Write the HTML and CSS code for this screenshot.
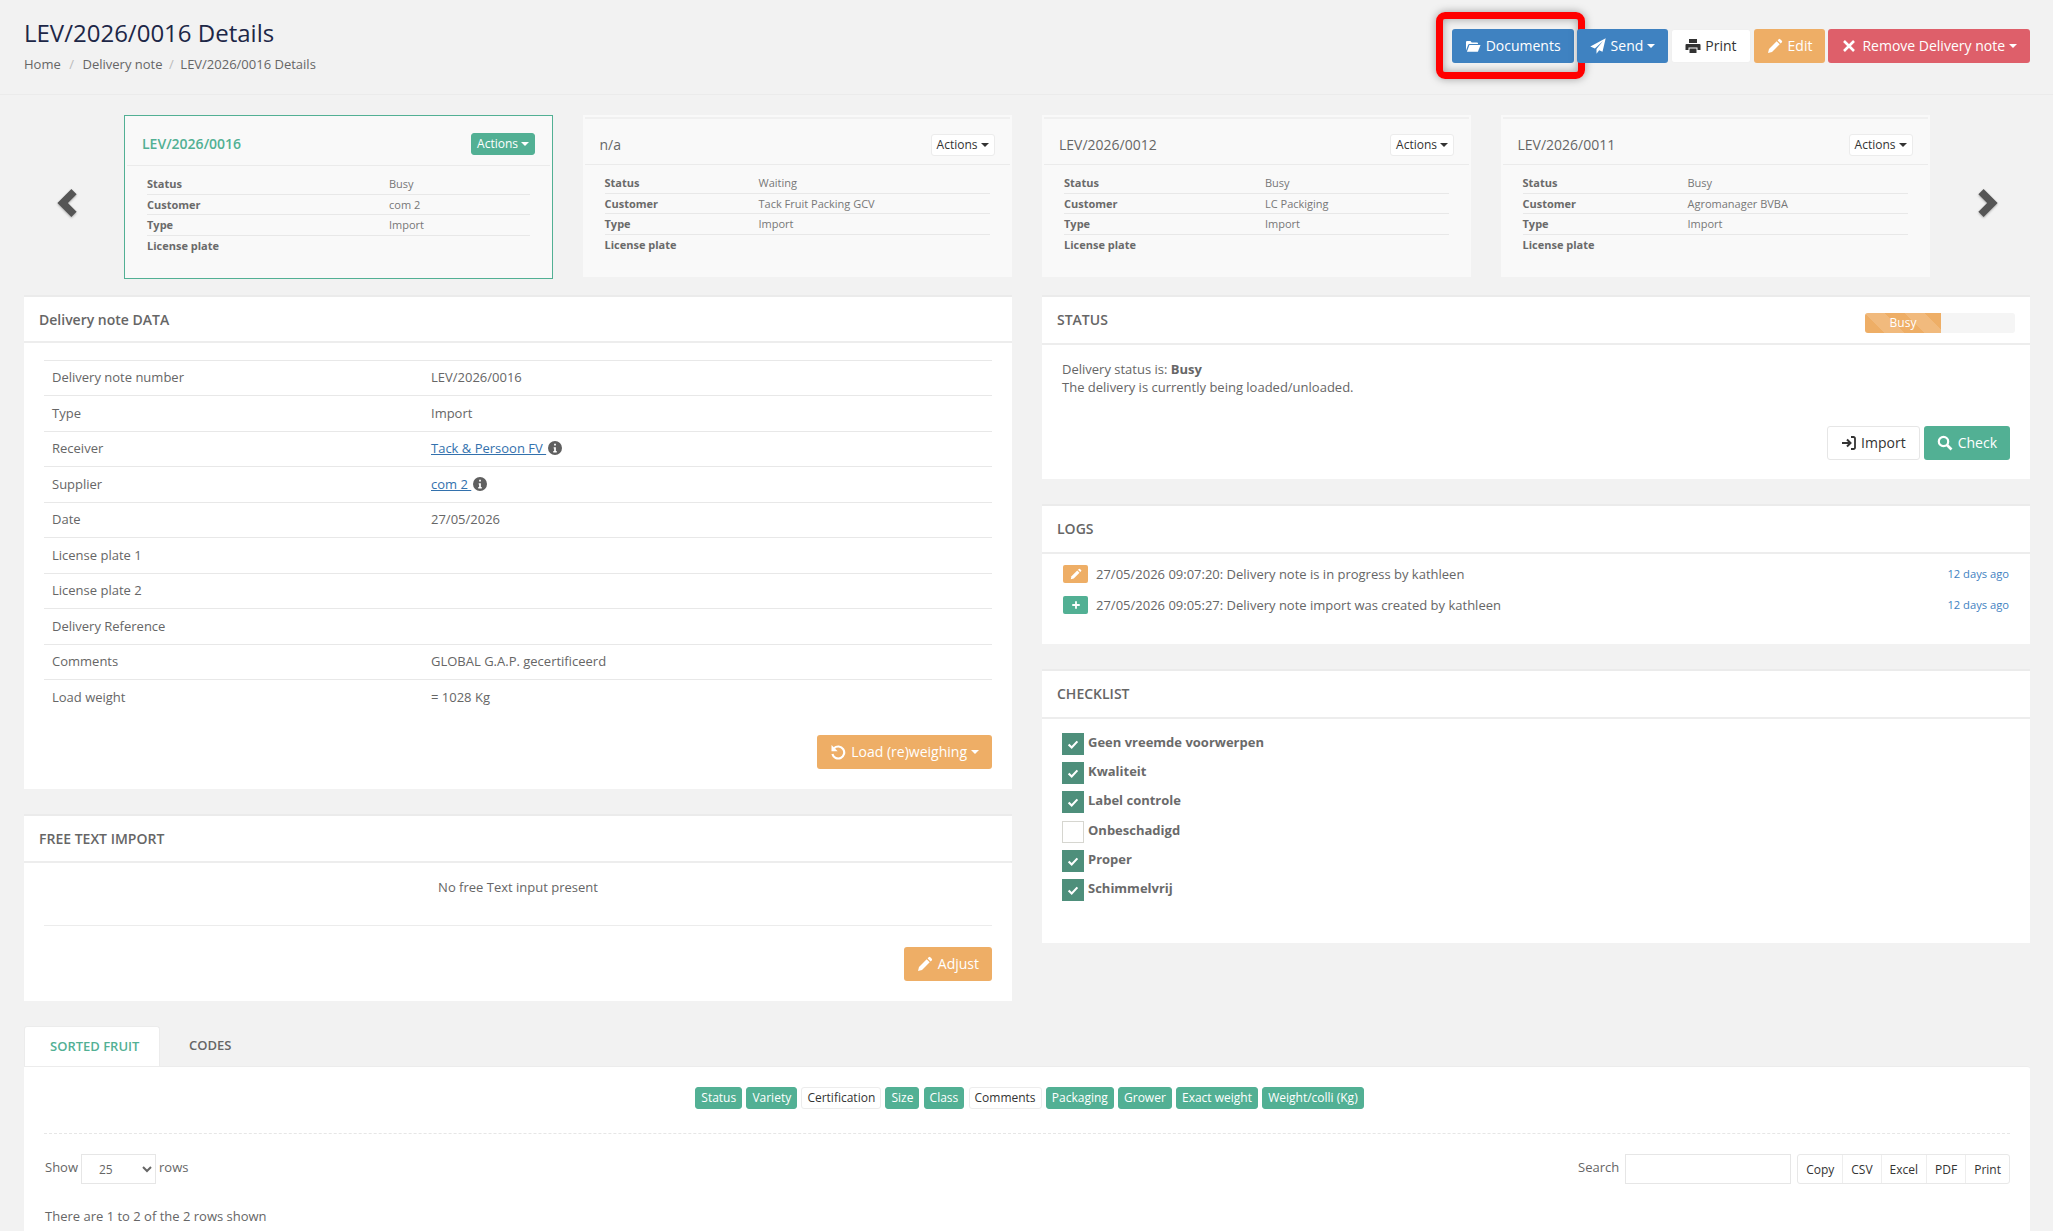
FILE: index.html
```html
<!DOCTYPE html>
<html lang="en">
<head>
<meta charset="utf-8">
<title>LEV/2026/0016 Details</title>
<link rel="stylesheet" href="styles.css">
</head>
<body>
<svg class="defs" width="0" height="0" aria-hidden="true">
  <symbol id="i-folder" viewBox="0 0 16 16"><path d="M1 4a1 1 0 0 1 1-1h3.500l1.200 1.400H12a1 1 0 0 1 1 1V6H4.500a1.500 1.500 0 0 0-1.400 1L1 12.500z"/><path d="M4.400 7h11.100l-2.400 6.200a1 1 0 0 1-.9.6H1.900z"/></symbol>
  <symbol id="i-plane" viewBox="0 0 16 16"><path d="M15.700.3.3 8.600l4.600 1.800L13 3 6.500 11v4.700l2.700-3.400 3.300 1.500z"/></symbol>
  <symbol id="i-print" viewBox="0 0 16 16"><path d="M4 1h8v4H4z"/><path d="M1.500 6h13a1 1 0 0 1 1 1v5h-3V9.500h-9V12h-3V7a1 1 0 0 1 1-1z"/><path d="M4.500 10.500h7V15h-7z"/></symbol>
  <symbol id="i-pencil" viewBox="0 0 16 16"><path d="M11.800 1.200a1 1 0 0 1 1.400 0l1.600 1.600a1 1 0 0 1 0 1.400l-1.200 1.200-3-3z"/><path d="M9.700 3.300l3 3L5 14l-4 1 1-4z"/></symbol>
  <symbol id="i-x" viewBox="0 0 16 16"><path d="M3 3l10 10M13 3 3 13" fill="none" stroke="currentColor" stroke-width="2.600"/></symbol>
  <symbol id="i-left" viewBox="0 0 16 16"><path d="M10.500 0 2.500 8l8 8 3-3-5-5 5-5z"/></symbol>
  <symbol id="i-right" viewBox="0 0 16 16"><path d="M5.500 0l8 8-8 8-3-3 5-5-5-5z"/></symbol>
  <symbol id="i-info" viewBox="0 0 16 16"><circle cx="8" cy="8" r="8"/><path d="M7 3h2v2H7zM6.500 7H9v4.500h1V13H6v-1.500h1V8.500h-.5z" fill="#fff"/></symbol>
  <symbol id="i-undo" viewBox="0 0 16 16"><path d="M4 4.200A6 6 0 1 1 2.400 10" fill="none" stroke="currentColor" stroke-width="2.200"/><path d="M1.500 1v6.200h6.200z"/></symbol>
  <symbol id="i-search" viewBox="0 0 16 16"><circle cx="6.500" cy="6.500" r="4.700" fill="none" stroke="currentColor" stroke-width="2.200"/><path d="M10 10l4.500 4.500" fill="none" stroke="currentColor" stroke-width="2.600"/></symbol>
  <symbol id="i-signin" viewBox="0 0 16 16"><path d="M1 8h8M6 4.500 9.500 8 6 11.500" fill="none" stroke="currentColor" stroke-width="2"/><path d="M10 2h2.500A1.500 1.500 0 0 1 14 3.500v9a1.500 1.500 0 0 1-1.500 1.500H10" fill="none" stroke="currentColor" stroke-width="1.800"/></symbol>
  <symbol id="i-plus" viewBox="0 0 16 16"><path d="M8 3v10M3 8h10" fill="none" stroke="currentColor" stroke-width="2.400"/></symbol>
  <symbol id="i-check" viewBox="0 0 16 16"><path d="M3 8.500 6.500 12 13 5" fill="none" stroke="currentColor" stroke-width="2.400"/></symbol>
</svg>

<header class="page-head">
  <div>
    <h1 class="page-title">LEV/2026/0016 Details</h1>
    <nav class="crumbs"><span>Home</span><i>/</i><span>Delivery note</span><i>/</i><span>LEV/2026/0016 Details</span></nav>
  </div>
  <div class="head-actions">
    <a class="btn blue highlighted"><svg class="ico"><use href="#i-folder"/></svg>Documents</a>
    <a class="btn blue"><svg class="ico"><use href="#i-plane"/></svg>Send<b class="caret"></b></a>
    <a class="btn white tight"><svg class="ico"><use href="#i-print"/></svg>Print</a>
    <a class="btn orange"><svg class="ico"><use href="#i-pencil"/></svg>Edit</a>
    <a class="btn red"><svg class="ico"><use href="#i-x"/></svg>Remove Delivery note<b class="caret"></b></a>
  </div>
</header>

<section class="carousel">
  <div class="arrow arrow-prev"><svg class="arrow-ico"><use href="#i-left"/></svg></div>
  <article class="mini active">
    <div class="mini-head"><span>LEV/2026/0016</span><a class="btn-xs green">Actions<b class="caret"></b></a></div>
    <dl class="mini-table">
      <div><dt>Status</dt><dd>Busy</dd></div>
      <div><dt>Customer</dt><dd>com 2</dd></div>
      <div><dt>Type</dt><dd>Import</dd></div>
      <div><dt>License plate</dt><dd></dd></div>
    </dl>
  </article>
  <article class="mini cols-b">
    <div class="mini-head"><span>n/a</span><a class="btn-xs">Actions<b class="caret"></b></a></div>
    <dl class="mini-table">
      <div><dt>Status</dt><dd>Waiting</dd></div>
      <div><dt>Customer</dt><dd>Tack Fruit Packing GCV</dd></div>
      <div><dt>Type</dt><dd>Import</dd></div>
      <div><dt>License plate</dt><dd></dd></div>
    </dl>
  </article>
  <article class="mini cols-c">
    <div class="mini-head"><span>LEV/2026/0012</span><a class="btn-xs">Actions<b class="caret"></b></a></div>
    <dl class="mini-table">
      <div><dt>Status</dt><dd>Busy</dd></div>
      <div><dt>Customer</dt><dd>LC Packiging</dd></div>
      <div><dt>Type</dt><dd>Import</dd></div>
      <div><dt>License plate</dt><dd></dd></div>
    </dl>
  </article>
  <article class="mini cols-d">
    <div class="mini-head"><span>LEV/2026/0011</span><a class="btn-xs">Actions<b class="caret"></b></a></div>
    <dl class="mini-table">
      <div><dt>Status</dt><dd>Busy</dd></div>
      <div><dt>Customer</dt><dd>Agromanager BVBA</dd></div>
      <div><dt>Type</dt><dd>Import</dd></div>
      <div><dt>License plate</dt><dd></dd></div>
    </dl>
  </article>
  <div class="arrow arrow-next"><svg class="arrow-ico"><use href="#i-right"/></svg></div>
</section>

<main class="columns">
  <div class="col">
    <section class="panel panel-data">
      <h2 class="panel-head cap-none">Delivery note DATA</h2>
      <div class="panel-body">
        <div class="data-table">
          <div class="row"><span>Delivery note number</span><span>LEV/2026/0016</span></div>
          <div class="row"><span>Type</span><span>Import</span></div>
          <div class="row"><span>Receiver</span><span><a class="link">Tack &amp; Persoon FV </a><svg class="info"><use href="#i-info"/></svg></span></div>
          <div class="row"><span>Supplier</span><span><a class="link">com 2 </a><svg class="info"><use href="#i-info"/></svg></span></div>
          <div class="row"><span>Date</span><span>27/05/2026</span></div>
          <div class="row"><span>License plate 1</span><span></span></div>
          <div class="row"><span>License plate 2</span><span></span></div>
          <div class="row"><span>Delivery Reference</span><span></span></div>
          <div class="row"><span>Comments</span><span>GLOBAL G.A.P. gecertificeerd</span></div>
          <div class="row"><span>Load weight</span><span>= 1028 Kg</span></div>
        </div>
        <div class="panel-actions load-actions"><a class="btn orange"><svg class="ico"><use href="#i-undo"/></svg>Load (re)weighing<b class="caret"></b></a></div>
      </div>
    </section>
    <section class="panel panel-free">
      <h2 class="panel-head">FREE TEXT IMPORT</h2>
      <div class="panel-body">
        <p class="empty">No free Text input present</p>
        <div class="panel-actions"><a class="btn orange"><svg class="ico"><use href="#i-pencil"/></svg>Adjust</a></div>
      </div>
    </section>
  </div>

  <div class="col">
    <section class="panel panel-status">
      <h2 class="panel-head">STATUS<span class="progress"><span class="progress-bar">Busy</span></span></h2>
      <div class="panel-body">
        <p class="status-text">Delivery status is: <strong>Busy</strong><br>The delivery is currently being loaded/unloaded.</p>
        <div class="panel-actions status-actions">
          <a class="btn white bordered tight"><svg class="ico"><use href="#i-signin"/></svg>Import</a>
          <a class="btn green"><svg class="ico"><use href="#i-search"/></svg>Check</a>
        </div>
      </div>
    </section>
    <section class="panel panel-logs">
      <h2 class="panel-head">LOGS</h2>
      <ul class="logs">
        <li><span class="log-ico orange"><svg class="log-svg"><use href="#i-pencil"/></svg></span><span class="log-text">27/05/2026 09:07:20: Delivery note is in progress by kathleen</span><span class="log-time">12 days ago</span></li>
        <li><span class="log-ico green"><svg class="log-svg"><use href="#i-plus"/></svg></span><span class="log-text">27/05/2026 09:05:27: Delivery note import was created by kathleen</span><span class="log-time">12 days ago</span></li>
      </ul>
    </section>
    <section class="panel panel-check">
      <h2 class="panel-head">CHECKLIST</h2>
      <ul class="checks">
        <li><span class="box on"><svg class="box-svg"><use href="#i-check"/></svg></span>Geen vreemde voorwerpen</li>
        <li><span class="box on"><svg class="box-svg"><use href="#i-check"/></svg></span>Kwaliteit</li>
        <li><span class="box on"><svg class="box-svg"><use href="#i-check"/></svg></span>Label controle</li>
        <li><span class="box"></span>Onbeschadigd</li>
        <li><span class="box on"><svg class="box-svg"><use href="#i-check"/></svg></span>Proper</li>
        <li><span class="box on"><svg class="box-svg"><use href="#i-check"/></svg></span>Schimmelvrij</li>
      </ul>
    </section>
  </div>
</main>

<section class="tabs-wrap">
  <div class="tabs"><a class="tab active">SORTED FRUIT</a><a class="tab">CODES</a></div>
  <div class="tab-body">
    <div class="chips">
      <a class="chip on">Status</a><a class="chip on">Variety</a><a class="chip">Certification</a><a class="chip on">Size</a><a class="chip on">Class</a><a class="chip">Comments</a><a class="chip on">Packaging</a><a class="chip on">Grower</a><a class="chip on">Exact weight</a><a class="chip on">Weight/colli (Kg)</a>
    </div>
    <div class="table-tools">
      <div class="tool-group"><span class="nudge">Show</span><select class="select"><option>25</option></select><span>rows</span></div>
      <div class="tool-group right"><span>Search</span><input class="search" type="text" aria-label="Search">
        <div class="exports"><a>Copy</a><a>CSV</a><a>Excel</a><a>PDF</a><a>Print</a></div>
      </div>
    </div>
    <p class="count">There are 1 to 2 of the 2 rows shown</p>
  </div>
</section>
</body>
</html>
```

FILE: styles.css
```css
* { box-sizing: border-box; }
html, body { height: 1231px; overflow: hidden; }
body {
  margin: 0;
  background: #f2f2f2;
  color: #666;
  font: 13px/18px "Open Sans", sans-serif;
}
h1, h2, p, ul, dl, dd { margin: 0; padding: 0; }
ul { list-style: none; }
.defs { position: absolute; }
.ico { width: 16px; height: 16px; fill: currentColor; margin-right: 5px; flex: none; }
.tight .ico { margin-right: 4px; }

.page-head {
  height: 95px;
  padding: 0 23px 0 24px;
  border-bottom: 1px solid #ebebeb;
  display: flex;
  justify-content: space-between;
  align-items: flex-start;
}
.page-title {
  margin-top: 16px;
  font-size: 24px;
  line-height: 33px;
  font-weight: 400;
  color: #1d2747;
}
.crumbs { margin-top: 6px; display: flex; font-size: 13px; line-height: 18px; color: #666; }
.crumbs i { font-style: normal; color: #bbb; margin: 0 8.500px; }
.crumbs i:last-of-type { margin: 0 6.500px; }
.head-actions { margin-top: 29px; display: flex; gap: 3px; }

.btn {
  height: 34px;
  padding: 0 13px;
  border-radius: 3px;
  display: inline-flex;
  align-items: center;
  font-size: 14px;
  white-space: nowrap;
  position: relative;
}
.btn.blue { background: #3f82c1; color: #fff; }
.btn.white { background: #fff; color: #333; border: 1px solid #f0f0f0; }
.btn.white.bordered { border-color: #e6e6e6; }
.btn.orange { background: #eeae66; color: #fff; }
.btn.red { background: #de5f6a; color: #fff; }
.btn.green { background: #52b094; color: #fff; }
.highlighted::after {
  content: "";
  position: absolute;
  left: -16px;
  right: -11px;
  top: -17px;
  bottom: -16px;
  border: 7px solid #ff0000;
  border-radius: 9px;
  box-shadow: 0 0 8px rgba(0, 0, 0, .35), inset 0 0 8px rgba(0, 0, 0, .35);
}
.caret {
  display: inline-block;
  width: 0;
  height: 0;
  margin-left: 4px;
  border-top: 4px solid currentColor;
  border-left: 4px solid transparent;
  border-right: 4px solid transparent;
}

.carousel {
  padding-top: 20px;
  height: 200px;
  display: grid;
  grid-template-columns: 124px 458.500px 459.500px 458.500px 429px 124px;
}
.arrow { padding-top: 74px; }
.arrow-prev { padding-left: 53px; }
.arrow-next { padding-left: 44px; }
.arrow-ico { width: 28px; height: 28px; fill: #555; filter: drop-shadow(0 1px 1px rgba(0,0,0,.3)); }
.mini {
  width: 429px;
  height: 162px;
  padding-top: 2px;
  background: #f9f9f9;
  justify-self: start;
}
.mini.active { height: 164px; padding: 1px; border: 1px solid #52b094; }
.mini-head {
  height: 48px;
  padding: 6px 15px 0 15px;
  border-top: 2px solid #f0f0f0;
  border-bottom: 1px solid #ebebeb;
  margin: 0 2px;
  display: flex;
  justify-content: space-between;
  align-items: center;
  font-size: 14px;
  color: #666;
}
.mini.active .mini-head { color: #52b094; height: 49px; margin: 0 1px; padding: 5px 15px 0 15px; border-top: 0; }
.mini.active .mini-head span { font-weight: 600; }
.btn-xs {
  height: 22px;
  padding: 0 5px;
  border: 1px solid #ececec;
  border-radius: 3px;
  background: #fff;
  color: #333;
  font-size: 12px;
  font-weight: 400;
  display: inline-flex;
  align-items: center;
}
.btn-xs .caret { margin-left: 3px; }
.btn-xs.green { background: #52b094; border-color: #52b094; color: #fff; }
.mini-table { padding: 8px 22px 0; font-size: 11px; line-height: 20px; }
.mini.active .mini-table { padding: 8px 21px 0 21px; }
.mini-table > div {
  display: grid;
  grid-template-columns: 154px 1fr;
  height: 20.500px;
  border-bottom: 1px solid #e8e8e8;
}
.cols-c .mini-table > div { grid-template-columns: 201px 1fr; }
.cols-d .mini-table > div { grid-template-columns: 165px 1fr; }
.mini.active .mini-table > div { grid-template-columns: 242px 1fr; }
.mini-table > div:last-child { border-bottom: 0; }
.mini-table dt { font-weight: 700; color: #6a6a6a; }
.mini-table dd { color: #777; }

.columns {
  padding: 0 23px 0 24px;
  display: grid;
  grid-template-columns: 988px 988px;
  column-gap: 30px;
  align-items: start;
}
.col { display: flex; flex-direction: column; gap: 25px; }
.panel { background: #fff; border-top: 2px solid #ebebeb; }
.panel-head {
  height: 46px;
  padding: 0 15px;
  border-bottom: 2px solid #ededed;
  display: flex;
  align-items: center;
  justify-content: space-between;
  font-size: 14px;
  font-weight: 600;
  color: #666;
}
.panel-data .panel-head { padding-top: 2px; }
.panel-free .panel-head { height: 47px; }
.panel-logs .panel-head,
.panel-check .panel-head { height: 48px; }
.panel-body { padding: 16.500px 20px 20px; }
.panel-actions { display: flex; justify-content: flex-end; gap: 4px; }

.data-table { border-top: 1px solid #e8e8e8; }
.row {
  height: 35.500px;
  padding: 0 0 1px 8px;
  border-bottom: 1px solid #e8e8e8;
  display: grid;
  grid-template-columns: 379px 1fr;
  align-items: center;
}
.row:last-child { border-bottom: 0; }
.link { color: #3371ad; text-decoration: underline; }
.info { width: 14px; height: 14px; fill: #5f5f5f; vertical-align: -2px; margin-left: 2px; }
.load-actions { margin-top: 19.500px; }

.panel-free { height: 187px; }
.panel-free .panel-body { padding-top: 15px; }
.empty {
  text-align: center;
  height: 48px;
  border-bottom: 1px solid #ececec;
  margin-bottom: 21px;
}

.panel-status { height: 184px; }
.panel-status .panel-head { height: 48px; }
.progress {
  width: 150px;
  height: 20px;
  background: #f5f5f5;
  border-radius: 3px;
  margin-top: 5px;
  overflow: hidden;
  display: block;
}
.progress-bar {
  display: block;
  width: 76px;
  height: 20px;
  text-align: center;
  font-size: 12px;
  font-weight: 400;
  line-height: 20px;
  color: #fff;
  background-color: #eeae66;
  background-image: linear-gradient(45deg, rgba(255,255,255,.15) 25%, transparent 25%, transparent 50%, rgba(255,255,255,.15) 50%, rgba(255,255,255,.15) 75%, transparent 75%, transparent);
  background-size: 40px 40px;
}
.status-text { font-size: 13px; line-height: 17.500px; }
.status-actions { margin-top: 30px; }
.panel-status .panel-body { padding: 16px 20px 20px 20px; }

.panel-logs { height: 140px; }
.logs { padding: 11px 21px 0 21px; }
.logs li { display: flex; align-items: center; height: 18px; margin-bottom: 13px; }
.log-ico {
  width: 25px;
  height: 18px;
  border-radius: 2px;
  display: flex;
  align-items: center;
  justify-content: center;
  color: #fff;
  margin-right: 8px;
}
.log-ico.orange { background: #eeae66; }
.log-ico.green { background: #52b094; }
.log-svg { width: 12px; height: 12px; fill: currentColor; }
.log-text { flex: 1; }
.log-time { font-size: 11.200px; color: #3f82c1; }

.panel-check { height: 274px; }
.checks { padding: 14px 20px 0; }
.checks li {
  display: flex;
  align-items: flex-start;
  height: 29.200px;
  font-weight: 700;
  color: #6a6a6a;
}
.box {
  width: 22px;
  height: 22px;
  border: 1px solid #d6d6d0;
  background: #fff;
  margin-right: 4px;
  display: flex;
  align-items: center;
  justify-content: center;
  flex: none;
}
.box.on { background: #4e8f7b; border-color: #4e8f7b; color: #fff; }
.box-svg { width: 14px; height: 14px; }

.tabs-wrap { padding: 25px 23px 0 24px; }
.tabs { display: flex; height: 40px; }
.tab {
  padding: 0 20px;
  height: 40px;
  line-height: 39px;
  font-size: 13px;
  font-weight: 600;
  color: #666;
  margin-right: 10px;
}
.tab.active {
  background: #fff;
  color: #52b094;
  border: 1px solid #ececec;
  border-bottom: 0;
  border-radius: 3px 3px 0 0;
  padding: 0 20px 0 25px;
  width: 136px;
  margin-right: 9px;
  white-space: nowrap;
}
.tab-body {
  background: #fff;
  border-top: 1px solid #ececec;
  padding: 20px 20px 0;
  height: 200px;
  border-radius: 0 3px 0 0;
}
.chips {
  display: flex;
  justify-content: center;
  gap: 4.200px;
  padding: 0 0 24px 5px;
  border-bottom: 1px dashed #e6e6e6;
}
.chip {
  height: 22px;
  padding: 0 5px;
  line-height: 20px;
  border: 1px solid #ececec;
  border-radius: 3px;
  background: #fff;
  color: #333;
  font-size: 12px;
}
.chip.on { background: #52b094; border-color: #52b094; color: #fff; }
.table-tools { display: flex; justify-content: space-between; margin-top: 20px; }
.tool-group { display: flex; align-items: flex-start; gap: 3px; font-size: 13px; line-height: 26px; }
.tool-group.right { gap: 6px; }
.nudge { padding-left: 1px; }
.select {
  width: 75px;
  height: 30px;
  border: 1px solid #e6e6e6;
  background: #fff;
  color: #666;
  font: 12px "Open Sans", sans-serif;
  padding: 1px 0 0 13px;
  border-radius: 0;
}
.search { width: 166px; height: 30px; border: 1px solid #e6e6e6; background: #fff; }
.exports {
  display: flex;
  height: 30px;
  border: 1px solid #e8e8e8;
  border-radius: 3px;
  color: #333;
  font-size: 12px;
  line-height: 30px;
}
.exports a { padding: 0 8px; border-left: 1px solid #eee; }
.exports a:first-child { border-left: 0; }
.count { margin-top: 23px; padding-left: 1px; font-size: 13px; }
```
